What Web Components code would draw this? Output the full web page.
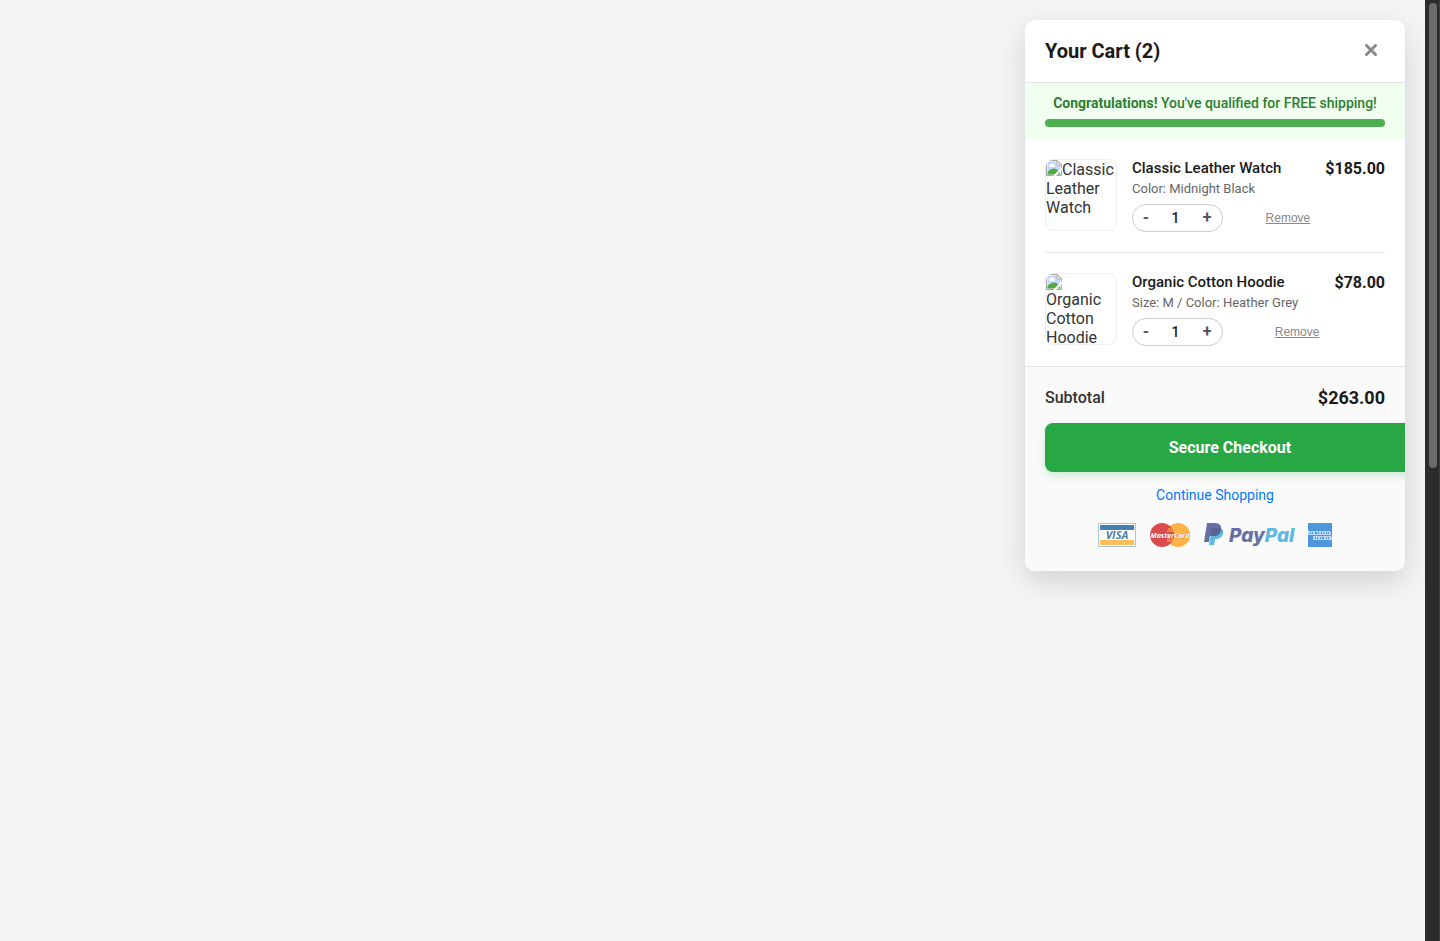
<!DOCTYPE html>
<html lang="en">
<head>
<meta charset="utf-8">
<meta name="viewport" content="width=device-width, initial-scale=1">
<title>Your Cart</title>
<style>
  html, body { height: 100%; }
  body { margin: 0; font-family: Roboto, "Liberation Sans", sans-serif; font-size: 16px; color: #333; background: #f4f5f7; overflow: hidden; }
</style>
</head>
<body>
<shop-page>
  <cart-drawer count="2">
    <shipping-banner slot="banner"><strong>Congratulations!</strong> You've qualified for FREE shipping!</shipping-banner>
    <cart-item name="Classic Leather Watch" price="$185.00" qty="1">Color: Midnight Black</cart-item>
    <cart-item name="Organic Cotton Hoodie" price="$78.00" qty="1">Size: M / Color: Heather Grey</cart-item>
    <cart-summary slot="footer" total="$263.00"><payment-marks></payment-marks></cart-summary>
  </cart-drawer>
</shop-page>

<script>
const attach = (el, html) => { el.attachShadow({ mode: "open" }).innerHTML = html; };

class ShopPage extends HTMLElement {
  connectedCallback() {
    attach(this, `
      <style>
        :host { display: flex; height: 100%; }
        main { flex: 1; min-width: 0; display: flex; justify-content: flex-end; align-items: flex-start; padding: 20px; box-sizing: border-box; }
      </style>
      <main><slot></slot></main>
      <scroll-rail></scroll-rail>`);
  }
}

class ScrollRail extends HTMLElement {
  connectedCallback() {
    attach(this, `
      <style>
        :host { display: block; flex: none; width: 15px; box-sizing: border-box; padding: 3px 2px 3px 4px; background: #2c2c2c; border-right: 1px solid #3d3d3d; }
        div { height: 50%; max-height: 465px; width: 8px; border-radius: 4px; background: #6b6b6b; }
      </style>
      <div></div>`);
  }
}

class CartDrawer extends HTMLElement {
  connectedCallback() {
    attach(this, `
      <style>
        :host { display: block; width: 380px; max-width: 100%; background: #fff; border-radius: 10px; overflow: hidden; box-shadow: 0 10px 30px rgba(0,0,0,.15); }
        header { display: flex; justify-content: space-between; align-items: center; height: 62px; padding: 0 20px; border-bottom: 1px solid #e5e5e7; }
        h2 { margin: 0; font-size: 20px; line-height: 24px; font-weight: 700; color: #1a1a1a; }
        button { display: flex; padding: 7px; border: 0; background: none; color: #888; cursor: pointer; }
        .items { padding: 0 20px; }
      </style>
      <header>
        <h2>Your Cart (${this.getAttribute("count")})</h2>
        <button type="button" aria-label="Close cart"><svg width="14" height="14" viewBox="0 0 14 14" fill="none" stroke="currentColor" stroke-width="3" stroke-linecap="round"><path d="M2.500 1.500 L11.500 10.500 M11.500 1.500 L2.500 10.500"/></svg></button>
      </header>
      <slot name="banner"></slot>
      <div class="items"><slot></slot></div>
      <slot name="footer"></slot>`);
  }
}

class ShippingBanner extends HTMLElement {
  connectedCallback() {
    attach(this, `
      <style>
        :host { display: flex; flex-direction: column; gap: 8px; padding: 12px 20px; background: #f0fff0; color: #2e7d32; text-align: center; font-size: 14px; line-height: 16px; font-weight: 500; }
        ::slotted(strong) { font-weight: 700; }
        .bar { height: 8px; border-radius: 4px; background: #4caf50; }
        p { margin: 0; white-space: nowrap; }
      </style>
      <p><slot></slot></p>
      <div class="bar" role="progressbar" aria-label="Free shipping progress" aria-valuenow="100"></div>`);
  }
}

class MissingPhoto extends HTMLElement {
  connectedCallback() {
    attach(this, `
      <style>
        :host { display: block; flex: none; width: 70px; height: 70px; border: 1px solid #eee; border-radius: 8px; overflow: hidden; font-size: 16px; line-height: 19px; color: #333; }
        svg { float: left; width: 16px; height: 16px; }
      </style>
      <svg viewBox="0 0 16 16" aria-hidden="true">
        <path d="M.5.500H11L15.500 5V15.500H.5z" fill="#fff" stroke="#a5a5a5"/>
        <path d="M1.500 1.500H10.500V5.500H14.500V14.500H1.500z" fill="#c3d9f7"/>
        <path d="M3 6a1.600 1.600 0 0 1 2-2 2 2 0 0 1 3.500 1A1.300 1.300 0 0 1 8 7H4z" fill="#fff"/>
        <path d="M1.500 14.500V12Q5 8 8.500 8.500Q12 9 14.500 14.500z" fill="#53a93f"/>
        <path d="M16 7L7 16H10L16 10z" fill="#fff"/>
        <path d="M11 .5V5H15.500z" fill="#f5f5f5" stroke="#a5a5a5"/>
      </svg><slot></slot>`);
  }
}

class QtyStepper extends HTMLElement {
  connectedCallback() {
    attach(this, `
      <style>
        :host { display: flex; box-sizing: border-box; width: 91px; height: 28px; padding-right: 2px; border: 1px solid #ccc; border-radius: 20px; overflow: hidden; }
        button { flex: none; width: 26px; padding: 0; border: 0; background: none; font: 700 16px/24px Roboto, sans-serif; color: #555; cursor: pointer; }
        input { flex: 1; min-width: 0; padding: 0 2px 0 0; border: 0; background: none; text-align: center; font: 500 14px/26px Roboto, sans-serif; color: #1a1a1a; outline: 0; }
      </style>
      <button type="button" aria-label="Decrease quantity">-</button>
      <input type="text" inputmode="numeric" aria-label="Quantity" value="${this.getAttribute("value")}">
      <button type="button" aria-label="Increase quantity">+</button>`);
    const input = this.shadowRoot.querySelector("input");
    const [less, more] = this.shadowRoot.querySelectorAll("button");
    less.onclick = () => { input.value = Math.max(1, +input.value - 1); };
    more.onclick = () => { input.value = +input.value + 1; };
  }
}

class CartItem extends HTMLElement {
  connectedCallback() {
    const name = this.getAttribute("name");
    attach(this, `
      <style>
        :host { display: flex; align-items: flex-start; gap: 15px; padding: 20px 0; }
        :host(:not(:last-of-type)) { border-bottom: 1px solid #e5e5e7; }
        .info { flex: 1; min-width: 0; }
        h3 { margin: 0 0 4px; font-size: 15px; line-height: 18px; font-weight: 500; color: #1a1a1a; }
        p { margin: 0 0 8px; font-size: 13px; line-height: 15px; color: #666; white-space: nowrap; }
        .row { display: flex; justify-content: space-between; align-items: center; }
        .remove { padding: 0; border: 0; background: none; font: 12px/14px "Liberation Sans", Arial, sans-serif; color: #888; text-decoration: underline; cursor: pointer; }
        .price { font-size: 16px; line-height: 19px; font-weight: 700; color: #1a1a1a; }
      </style>
      <missing-photo>${name}</missing-photo>
      <div class="info">
        <h3>${name}</h3>
        <p><slot></slot></p>
        <div class="row">
          <qty-stepper value="${this.getAttribute("qty")}"></qty-stepper>
          <button type="button" class="remove">Remove</button>
        </div>
      </div>
      <div class="price">${this.getAttribute("price")}</div>`);
  }
}

class CartSummary extends HTMLElement {
  connectedCallback() {
    attach(this, `
      <style>
        :host { display: block; padding: 20px 20px 24px; border-top: 1px solid #e5e5e7; background: #fafafa; }
        .total { display: flex; justify-content: space-between; align-items: center; margin-bottom: 15px; line-height: 21px; font-weight: 500; }
        .total strong { font-size: 18px; font-weight: 700; color: #1a1a1a; }
        .pay { display: block; width: 100%; padding: 15px; border-radius: 8px; background: #28a745; color: #fff; text-align: center; text-decoration: none; font-size: 16px; line-height: 19px; font-weight: 700; box-shadow: 0 4px 8px rgba(40,167,69,.2); }
        .more { display: block; width: fit-content; margin: 15px auto 20px; font-size: 14px; line-height: 16px; color: #007bff; text-decoration: none; }
      </style>
      <div class="total"><span>Subtotal</span><strong>${this.getAttribute("total")}</strong></div>
      <a class="pay" href="#checkout">Secure Checkout</a>
      <a class="more" href="#shop">Continue Shopping</a>
      <slot></slot>`);
  }
}

class PaymentMarks extends HTMLElement {
  connectedCallback() {
    attach(this, `
      <style>
        :host { display: flex; justify-content: center; gap: 14px; }
        svg { display: block; height: 24px; overflow: visible; }
        text { font-family: "Open Sans", "Noto Sans", sans-serif; font-weight: 700; font-style: italic; }
        .wordmark { font-family: Inter, sans-serif; font-weight: 800; }
      </style>
      <svg width="38" viewBox="0 0 38 24" role="img" aria-label="Visa">
        <path d="M.5.500h37v23H.5z" fill="#fff" stroke="#a9c4d8"/>
        <path d="M2 2h34v5H2z" fill="#4682b0"/><path d="M2 17h34v5H2z" fill="#ffbd5c"/>
        <text x="19" y="16" font-size="11" text-anchor="middle" fill="#4a7fa8">VISA</text>
      </svg>
      <svg width="40" viewBox="0 0 40 24" role="img" aria-label="MasterCard">
        <circle cx="28" cy="12" r="12" fill="#ffb545"/><circle cx="12" cy="12" r="12" fill="#dc4b4b"/>
        <path d="M18 6h5M17 8h6M17 16h6M17 18h5" stroke="#ffb545" stroke-width="1"/>
        <text x="20" y="15" font-size="7" text-anchor="middle" fill="#fff" stroke="#b34a4a" stroke-width=".4" paint-order="stroke">MasterCard</text>
      </svg>
      <svg width="90" viewBox="0 0 90 24" role="img" aria-label="PayPal">
        <path d="M5 22L8 5H16Q20 6 19 11Q17 16 12 16H11L10 22z" fill="#5db8e3"/>
        <path d="M3 0H11Q18 0 17 7Q16 13 9 13H6L5 19H0z" fill="#6571a6"/>
        <path d="M8 5H16.500L17 7Q16 13 9 13H6.500z" fill="#5b6392"/>
        <text class="wordmark" x="25" y="19" font-size="19" fill="#6571a6">Pay<tspan fill="#5db8e3">Pal</tspan></text>
      </svg>
      <svg width="24" viewBox="0 0 24 24" role="img" aria-label="American Express">
        <path d="M0 0h24v24H0z" fill="#4c98db"/>
        <g fill="none" stroke="#b9d7f2" stroke-width="1">
          <path d="M0 8.500H22M0 11.500H23M5 13.500H23M5 16.500H24"/>
          <path d="M0 10h2m1 0h1m1 0h2m2 0h1m1 0h2m1 0h1m1 0h2m1 0h1m1 0h2M5 15h2m1 0h1m1 0h2m1 0h1m2 0h2m1 0h1m1 0h3" stroke-width="2"/>
        </g>
      </svg>`);
  }
}

customElements.define("payment-marks", PaymentMarks);
customElements.define("cart-summary", CartSummary);
customElements.define("qty-stepper", QtyStepper);
customElements.define("missing-photo", MissingPhoto);
customElements.define("cart-item", CartItem);
customElements.define("shipping-banner", ShippingBanner);
customElements.define("cart-drawer", CartDrawer);
customElements.define("scroll-rail", ScrollRail);
customElements.define("shop-page", ShopPage);
</script>
</body>
</html>
